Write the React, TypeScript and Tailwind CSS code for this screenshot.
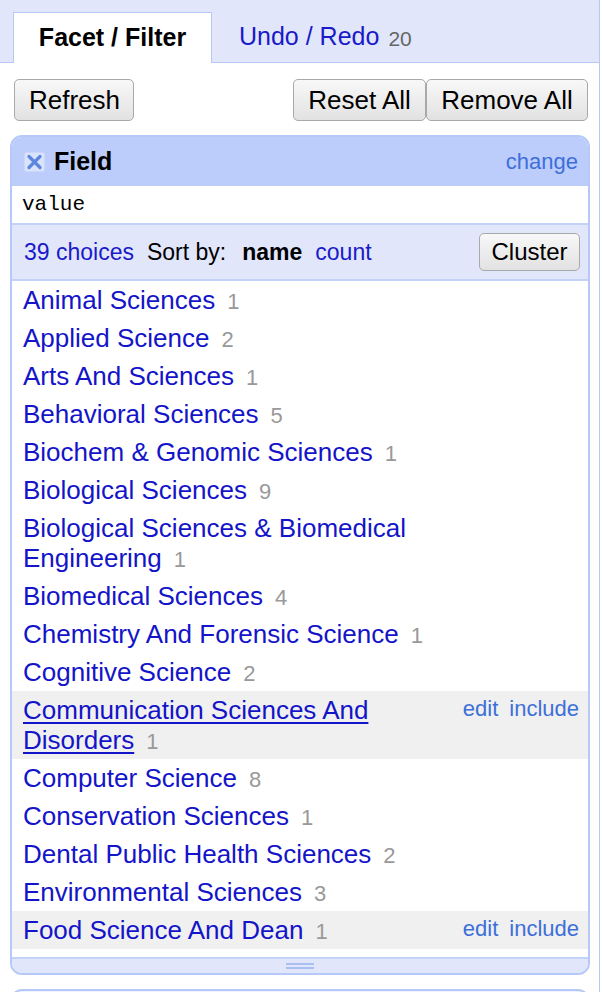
import React from "react";

const items: { name: string; count: number; hover?: boolean; hoverUnderline?: boolean }[] = [
  { name: "Animal Sciences", count: 1 },
  { name: "Applied Science", count: 2 },
  { name: "Arts And Sciences", count: 1 },
  { name: "Behavioral Sciences", count: 5 },
  { name: "Biochem & Genomic Sciences", count: 1 },
  { name: "Biological Sciences", count: 9 },
  { name: "Biological Sciences & Biomedical Engineering", count: 1 },
  { name: "Biomedical Sciences", count: 4 },
  { name: "Chemistry And Forensic Science", count: 1 },
  { name: "Cognitive Science", count: 2 },
  { name: "Communication Sciences And Disorders", count: 1, hover: true, hoverUnderline: true },
  { name: "Computer Science", count: 8 },
  { name: "Conservation Sciences", count: 1 },
  { name: "Dental Public Health Sciences", count: 2 },
  { name: "Environmental Sciences", count: 3 },
  { name: "Food Science And Dean", count: 1, hover: true },
];

function XIcon() {
  return (
    <svg width="21" height="20" viewBox="0 0 21 20" className="shrink-0">
      <rect x="0.5" y="0.5" width="20" height="19" rx="2" fill="#d9e3fb" />
      <path d="M5 4.5 L16 15.5 M16 4.5 L5 15.5" stroke="#5b86e0" strokeWidth="3.2" strokeLinecap="round" />
    </svg>
  );
}

const btn =
  "h-[42px] px-[14px] border border-[#a9a9a9] rounded-[5px] bg-gradient-to-b from-[#f8f8f8] to-[#e2e2e2] text-[26px] text-black leading-none";

export default function App() {
  return (
    <div className="w-[600px] min-h-[992px] border-r border-[#b6c8f5] bg-white font-['Liberation_Sans',Arial,sans-serif] overflow-hidden">
      {/* Tabs */}
      <div className="h-[63px] bg-[#e1e6fb] flex items-end pl-[13px]">
        <div className="flex items-end w-full">
          <div className="h-[51px] w-[199px] bg-white border border-b-0 border-[#b6c8f5] flex items-center justify-center text-[25px] font-bold text-black">
            Facet / Filter
          </div>
          <div className="flex-1 h-[51px] border-b border-[#b6c8f5] flex items-center pl-[27px]">
            <span className="text-[25px] text-[#1a1ac8]">Undo / Redo</span>
            <span className="text-[21px] text-[#666] ml-[9px] mt-[3px]">20</span>
          </div>
        </div>
      </div>
      <div className="h-0 border-b border-[#b6c8f5] w-[13px] -mt-px" />

      {/* Buttons */}
      <div className="flex items-center justify-between pl-[14px] pr-[11px] pt-[16px]">
        <button className={btn + " w-[120px]"}>Refresh</button>
        <div className="flex">
          <button className={btn + " w-[133px]"}>Reset All</button>
          <button className={btn + " w-[162px]"}>Remove All</button>
        </div>
      </div>

      {/* Facet panel */}
      <div className="mt-[14px] ml-[10px] w-[580px] border-2 border-[#b6c8f8] rounded-[12px] overflow-hidden">
        <div className="h-[49px] bg-[#bccdfb] flex items-center pl-[12px] pr-[10px]">
          <XIcon />
          <span className="ml-[9px] text-[25px] font-bold text-black">Field</span>
          <span className="ml-auto text-[22px] text-[#3d6fd9]">change</span>
        </div>
        <div className="h-[39px] bg-white border-b-2 border-[#c3d2f8] flex items-center pl-[10px] font-['Liberation_Mono','Courier_New',monospace] text-[21px] text-black">
          value
        </div>
        <div className="h-[56px] bg-[#e1e6fb] border-b-2 border-[#c3d2f8] flex items-center pl-[12px] pr-[8px] text-[23px]">
          <span className="text-[#1a1ac8]">39 choices</span>
          <span className="ml-[13px] text-black">Sort by:</span>
          <span className="ml-[16px] font-bold text-black">name</span>
          <span className="ml-[13px] text-[#1a1ac8]">count</span>
          <button className="ml-auto h-[38px] w-[101px] border border-[#a9a9a9] rounded-[5px] bg-gradient-to-b from-[#f8f8f8] to-[#e2e2e2] text-[24px] text-black leading-none">
            Cluster
          </button>
        </div>
        <div className="bg-white pb-[8px]">
          {items.map((it) => (
            <div
              key={it.name}
              className={
                "flex items-start pl-[11px] pr-[9px] py-[4px] " + (it.hover ? "bg-[#f0f0f0]" : "")
              }
            >
              <div className="flex-1 max-w-[400px] text-[26px] leading-[30px]">
                <span className={"text-[#1414c8] " + (it.hoverUnderline ? "underline underline-offset-[3px] decoration-[2px]" : "")}>
                  {it.name}
                </span>
                <span className="ml-[12px] text-[22px] leading-none text-[#999]">{it.count}</span>
              </div>
              {it.hover && (
                <div className="ml-auto flex text-[22px] leading-[30px] text-[#3d6fd9] -mt-[1px]">
                  <span>edit</span>
                  <span className="ml-[11px]">include</span>
                </div>
              )}
            </div>
          ))}
        </div>
        <div className="h-[16px] bg-[#e1e6fb] border-t-2 border-[#c3d2f8] flex items-center justify-center">
          <div className="w-[28px] flex flex-col gap-[2px]">
            <div className="h-[2px] bg-[#a9bff0]" />
            <div className="h-[2px] bg-[#a9bff0]" />
          </div>
        </div>
      </div>

      {/* Next panel start */}
      <div className="mt-[14px] ml-[10px] w-[580px] h-[40px] border-2 border-[#b6c8f8] rounded-t-[12px] bg-[#eef2fd]" />
    </div>
  );
}
